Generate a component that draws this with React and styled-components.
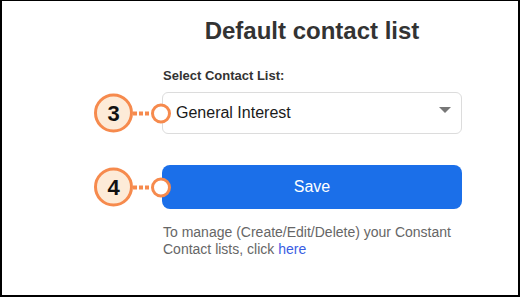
import React from "react";
import styled, { createGlobalStyle } from "styled-components";

const orange = "#f68a4d";

const GlobalStyle = createGlobalStyle`
  html, body {
    margin: 0;
    padding: 0;
    background: #ffffff;
  }
  body {
    font-family: "Liberation Sans", Arial, sans-serif;
  }
`;

const Frame = styled.div`
  width: 520px;
  height: 297px;
  box-sizing: border-box;
  border: 2px solid #000;
  border-top-width: 1px;
  background: #fff;
  padding: 16px 0 0 160px;
`;

const Column = styled.div`
  width: 300px;
  display: flex;
  flex-direction: column;
`;

const Title = styled.h1`
  margin: 0 0 23px 0;
  font-size: 24px;
  line-height: 28px;
  font-weight: bold;
  color: #333;
  text-align: center;
`;

const Label = styled.label`
  font-size: 13px;
  line-height: 16px;
  font-weight: bold;
  color: #333;
  margin-bottom: 8px;
  padding-left: 1px;
`;

const Field = styled.div`
  position: relative;
  margin-top: ${({ $gap }) => $gap || 0}px;
`;

const SelectBox = styled.div`
  height: 42px;
  box-sizing: border-box;
  border: 1px solid #dcdcdc;
  border-radius: 6px;
  display: flex;
  align-items: center;
  justify-content: space-between;
  padding: 0 10px 0 13px;
  font-size: 16px;
  color: #1a1a1a;
`;

const Caret = styled.span`
  width: 0;
  height: 0;
  border-left: 6px solid transparent;
  border-right: 6px solid transparent;
  border-top: 6px solid #777;
  margin-top: -6px;
`;

const SaveButton = styled.button`
  width: 100%;
  height: 44px;
  border: none;
  border-radius: 8px;
  background: #1b6fe9;
  color: #fff;
  font-family: inherit;
  font-size: 16px;
  cursor: pointer;
`;

const Help = styled.p`
  margin: 15px 0 0 1px;
  font-size: 14px;
  line-height: 16.5px;
  color: #666;
`;

const Link = styled.a`
  color: #3a5de3;
  text-decoration: none;
`;

// callout marker that sits over the left edge of a field
const Callout = styled.div`
  position: absolute;
  left: -68px;
  top: 50%;
  transform: translateY(-50%);
  display: flex;
  align-items: center;
`;

const Badge = styled.div`
  width: 39px;
  height: 39px;
  box-sizing: border-box;
  border: 3px solid ${orange};
  border-radius: 50%;
  background: #fdebd8;
  display: flex;
  align-items: center;
  justify-content: center;
  font-size: 22px;
  font-weight: bold;
  color: #111;
`;

const Dots = styled.div`
  width: 18px;
  height: 4px;
  background: repeating-linear-gradient(
    90deg,
    ${orange} 0 4px,
    transparent 4px 6px
  );
`;

const Ring = styled.div`
  width: 20px;
  height: 20px;
  box-sizing: border-box;
  border: 3px solid ${orange};
  border-radius: 50%;
  background: #fff;
`;

const Marker = ({ n }) => (
  <Callout>
    <Badge>{n}</Badge>
    <Dots />
    <Ring />
  </Callout>
);

export default function App() {
  return (
    <>
      <GlobalStyle />
      <Frame>
        <Column>
          <Title>Default contact list</Title>
          <Label>Select Contact List:</Label>
          <Field>
            <SelectBox>
              <span>General Interest</span>
              <Caret />
            </SelectBox>
            <Marker n={3} />
          </Field>
          <Field $gap={31}>
            <SaveButton>Save</SaveButton>
            <Marker n={4} />
          </Field>
          <Help>
            To manage (Create/Edit/Delete) your Constant Contact lists, click{" "}
            <Link href="#">here</Link>
          </Help>
        </Column>
      </Frame>
    </>
  );
}
